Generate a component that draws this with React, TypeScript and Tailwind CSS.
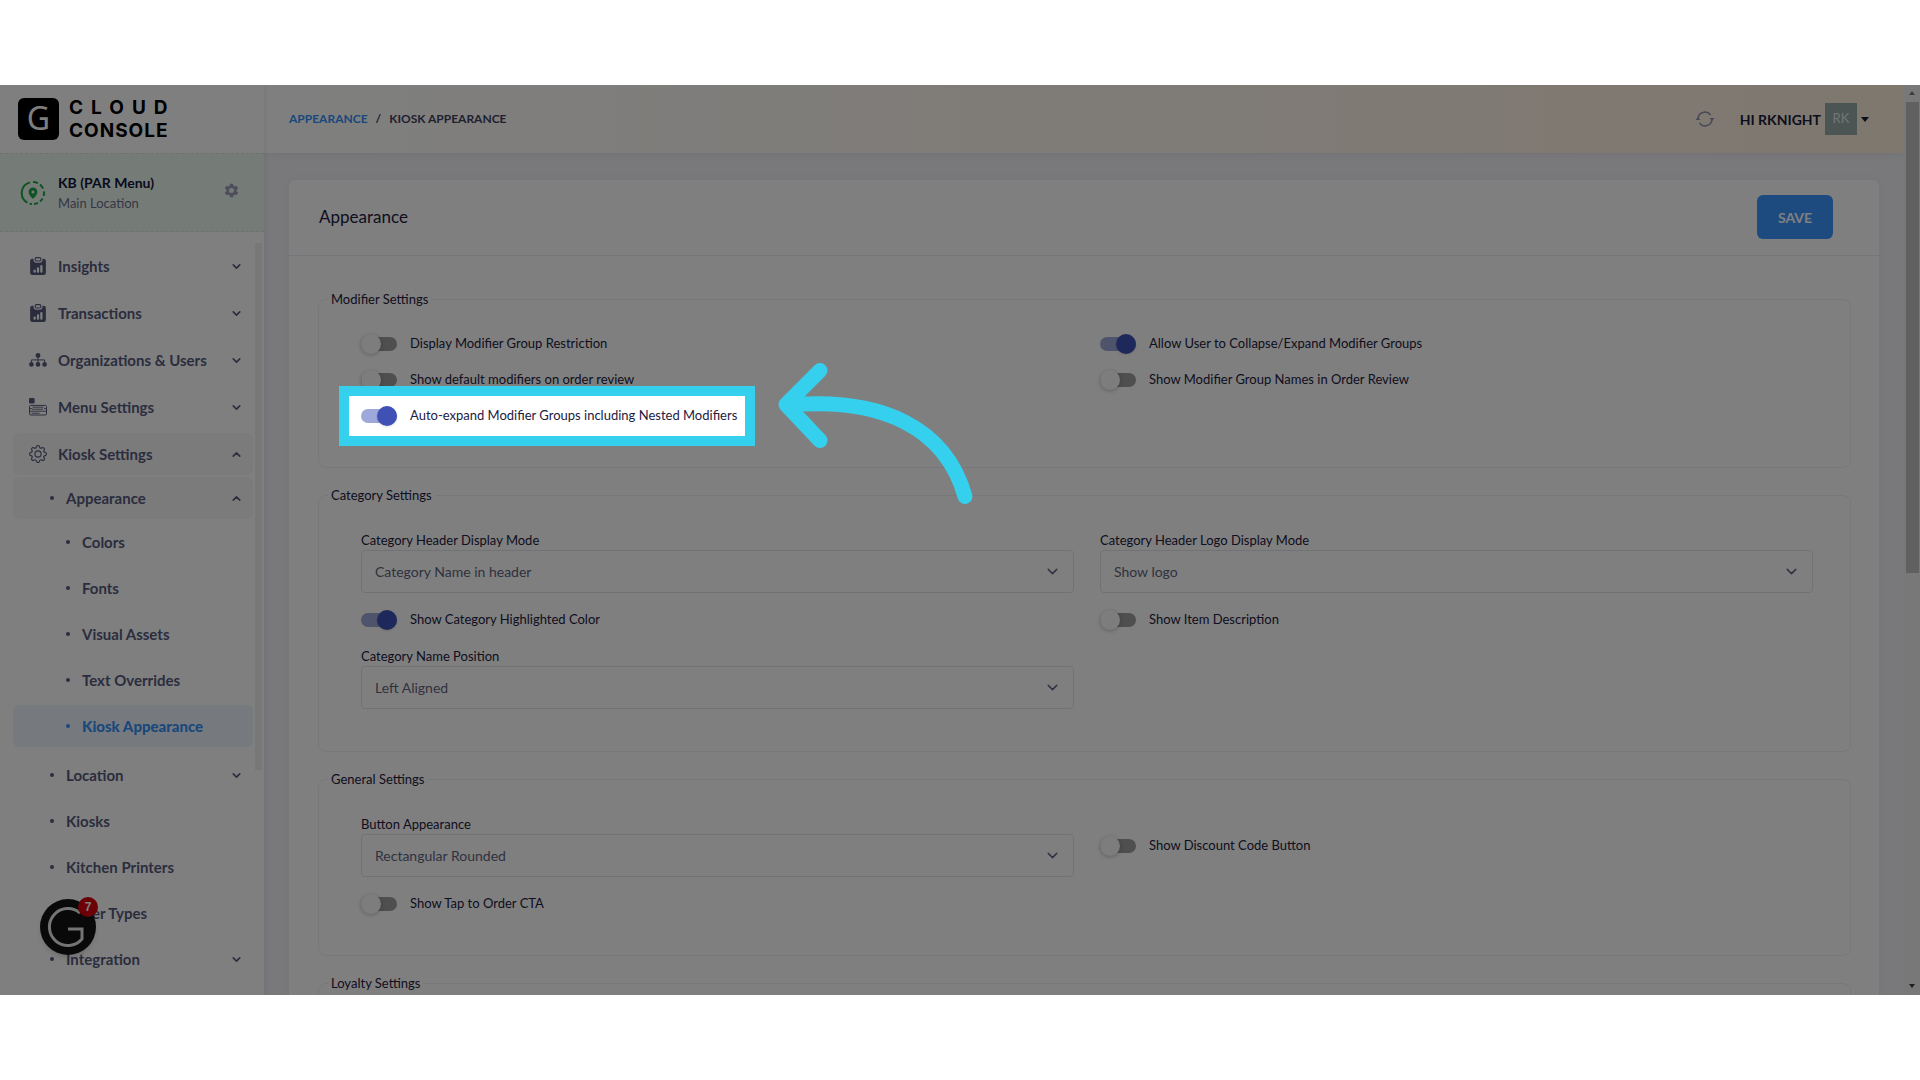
import { useState } from "react";
import { BsClipboardDataFill, BsGear } from "react-icons/bs";
import { MdSettings } from "react-icons/md";
import { FiChevronDown, FiChevronUp } from "react-icons/fi";

type NavItem = {
  label: string;
  level: 1 | 2 | 3;
  icon?: React.ReactNode;
  open?: boolean;
  group?: boolean;
  active?: boolean;
};

function OrgIcon() {
  return (
    <svg width="18" height="18" viewBox="0 0 18 18" fill="currentColor">
      <circle cx="9" cy="4.5" r="2.4" />
      <circle cx="2.4" cy="13.4" r="2.3" />
      <circle cx="9" cy="13.4" r="2.3" />
      <circle cx="15.6" cy="13.4" r="2.3" />
      <path d="M9 6v6M2.4 11.5V8.9h13.2v2.6" fill="none" stroke="currentColor" strokeWidth="1" />
    </svg>
  );
}

function MenuIcon() {
  return (
    <svg width="18" height="18" viewBox="0 0 18 18" fill="none" stroke="currentColor">
      <rect x="0" y="0" width="5.6" height="5.4" rx="1.2" fill="currentColor" stroke="none" />
      <rect x="0.5" y="7.4" width="17" height="9.6" rx="1.2" />
      <path d="M.5 10.6h2.5M15 10.6h2.5M.5 13.2h17M3.5 9.2h11M3 11.2h11M2.5 15.2h8" strokeWidth=".9" />
    </svg>
  );
}

const NAV: NavItem[] = [
  { label: "Insights", level: 1, icon: <BsClipboardDataFill size={18} />, group: true },
  { label: "Transactions", level: 1, icon: <BsClipboardDataFill size={18} />, group: true },
  { label: "Organizations & Users", level: 1, icon: <OrgIcon />, group: true },
  { label: "Menu Settings", level: 1, icon: <MenuIcon />, group: true },
  { label: "Kiosk Settings", level: 1, icon: <BsGear size={18} />, group: true, open: true },
  { label: "Appearance", level: 2, group: true, open: true },
  { label: "Colors", level: 3 },
  { label: "Fonts", level: 3 },
  { label: "Visual Assets", level: 3 },
  { label: "Text Overrides", level: 3 },
  { label: "Kiosk Appearance", level: 3, active: true },
  { label: "Location", level: 2, group: true },
  { label: "Kiosks", level: 2 },
  { label: "Kitchen Printers", level: 2 },
  { label: "Order Types", level: 2 },
  { label: "Integration", level: 2, group: true },
];

const INDENT = { 1: "pl-4", 2: "pl-9", 3: "pl-[52px]" };

function NavRow({ item }: { item: NavItem }) {
  let tone = "font-bold text-[#565b7c]";
  if (item.open) tone = "font-bold text-[#565b7c] bg-[#f6f6f9]";
  if (item.active) tone = "font-black text-[#3591f6] bg-[#edf5ff]";

  let gap = item.level === 1 ? "mb-[5px]" : "mb-1";
  if (item.open) gap = "mb-[2px]";
  if (item.active) gap = "mb-[7px]";

  return (
    <li className={gap}>
      <a href="#" className={`flex h-[42px] items-center rounded-md pr-[10px] text-[15px] ${INDENT[item.level]} ${tone}`}>
        {item.icon ? (
          <span className="w-[29px]">{item.icon}</span>
        ) : (
          <span className="w-[17px] pl-px">
            <span className="block h-1 w-1 rounded-full bg-current" />
          </span>
        )}
        <span className="flex-1 whitespace-nowrap">{item.label}</span>
        {item.group && (item.open ? <FiChevronUp size={13} strokeWidth={3} /> : <FiChevronDown size={13} strokeWidth={3} />)}
      </a>
    </li>
  );
}

function Sidebar() {
  return (
    <aside className="z-10 flex w-[264px] shrink-0 flex-col bg-white shadow-[0_0_6px_rgba(82,63,105,0.15)]">
      <div className="flex h-[68px] shrink-0 items-center gap-[10px] pl-[18px]">
        <span className="flex h-[42px] w-[41px] items-center justify-center rounded-md bg-black pb-[2px] font-['Noto_Sans'] text-[32px] text-white">
          G
        </span>
        <span className="font-['Inter'] text-[19px] leading-[23px] font-bold text-black">
          <span className="block tracking-[8px]">CLOUD</span>
          <span className="block tracking-[1px]">CONSOLE</span>
        </span>
      </div>
      <div className="flex h-[79px] shrink-0 items-center border-y border-dashed border-[#dbe5e0] bg-[#ebf7ef] pl-5">
        <svg width="26" height="26" viewBox="0 0 26 26" fill="none" stroke="#1fa64a" strokeWidth="2">
          <path d="M10 2.4A11 11 0 0 0 7.5 22.7M13 2a11 11 0 0 1 5 1.2M20 4.6a11 11 0 0 1 3 4M24 11.4a11 11 0 0 1-.4 4.6M22.6 18.4a11 11 0 0 1-2.6 3M18 22.8a11 11 0 0 1-4 1.2M12 24a11 11 0 0 1-2.5-.4" />
          <path d="M13 7.5a4.4 4.4 0 0 0-4.4 4.4c0 3 4.4 7 4.4 7s4.4-4 4.4-7A4.4 4.4 0 0 0 13 7.5z" fill="#1fa64a" stroke="none" />
          <circle cx="13" cy="12" r="1.5" fill="#ebf7ef" stroke="none" />
        </svg>
        <div className="flex-1 pl-3">
          <div className="text-[14px] leading-5 font-bold text-[#11163a]">KB (PAR Menu)</div>
          <div className="text-[13px] leading-5 text-[#6b6f8c]">Main Location</div>
        </div>
        <button aria-label="Location settings" className="mr-6 pb-1 text-[#9a9cb5]">
          <MdSettings size={17} />
        </button>
      </div>
      <div className="flex min-h-0 flex-1">
        <ul className="min-w-0 flex-1 pt-[13px] pl-[13px]">
          {NAV.map((item) => (
            <NavRow key={item.label} item={item} />
          ))}
        </ul>
        <div className="mr-[2px] ml-[2px] w-[7px] pt-[11px]">
          <div className="h-[527px] bg-[#f1f1f1]" />
        </div>
      </div>
    </aside>
  );
}

function TopBar() {
  return (
    <header className="flex h-[68px] shrink-0 items-center bg-linear-to-r from-white to-[#fff0de] pr-[35px] pl-[25px] shadow-[0_0_10px_rgba(82,63,105,0.1)]">
      <nav className="flex flex-1 gap-2 text-[12px] font-bold text-[#3f4260]">
        <a href="#" className="text-[#3591f6]">APPEARANCE</a>
        <span>/</span>
        <span>KIOSK APPEARANCE</span>
      </nav>
      <button aria-label="Refresh" className="mr-[25px] text-[#8f93b5]">
        <svg width="20" height="18" viewBox="0 0 20 18" fill="none" stroke="currentColor" strokeWidth="1.5">
          <path d="M3 9a7 7 0 0 1 12.6-4M17 9a7 7 0 0 1-12.6 4" />
          <path d="M.5 10h5L3 7zM14.5 8h5L17 11z" fill="currentColor" stroke="none" />
        </svg>
      </button>
      <button className="flex items-center gap-1 text-[14px] font-bold text-[#191b3a]">
        HI RKNIGHT
        <span className="flex h-8 w-8 items-center justify-center bg-[#96aaa9] text-[13px] font-normal text-[#e3eaea]">RK</span>
        <span className="border-x-4 border-t-[5px] border-x-transparent border-t-[#191b3a]" />
      </button>
    </header>
  );
}

function Toggle({ label, on, highlight }: { label: string; on?: boolean; highlight?: boolean }) {
  const [checked, setChecked] = useState(!!on);
  return (
    <label className="relative flex h-9 items-center self-center text-[13px] text-[#1d2040]">
      <span className="relative mr-[13px] flex h-5 w-9 items-center">
        <input
          type="checkbox"
          checked={checked}
          onChange={() => setChecked(!checked)}
          className="h-[14px] w-9 appearance-none rounded-full bg-[#9e9e9e] checked:bg-[#9fa8da]"
        />
        <span
          className={
            checked
              ? "pointer-events-none absolute right-0 h-5 w-5 rounded-full bg-[#3f51b5] shadow"
              : "pointer-events-none absolute left-0 h-5 w-5 rounded-full bg-[#fafafa] shadow-[0_1px_4px_rgba(0,0,0,0.25)]"
          }
        />
      </span>
      {label}
      {highlight && <Spotlight />}
    </label>
  );
}

// Frames one row, dims the rest of the window and points at it.
function Spotlight() {
  return (
    <>
      <span className="pointer-events-none absolute -top-3 -left-[22px] z-40 h-[60px] w-[416px] border-[10px] border-[#35d0ee] shadow-[0_0_0_3000px_rgba(0,0,0,0.5)]" />
      <svg
        className="pointer-events-none absolute -top-10 left-[413px] z-50 h-[150px] w-[202px]"
        viewBox="774 358 202 150"
        fill="none"
        stroke="#35d0ee"
        strokeWidth="15"
        strokeLinecap="round"
        strokeLinejoin="round"
      >
        <path d="M820 370.5 786 404.5 820 440.5M790 405C882 397 946 428 965 496.5" />
      </svg>
    </>
  );
}

function Select({ label, value }: { label: string; value: string }) {
  return (
    <label className="block pt-2 pb-[9px] text-[13px] leading-5 text-[#1d2040]">
      {label}
      <span className="relative block">
        <select className="block h-[43px] w-full appearance-none rounded border border-[#e2e5ec] bg-white px-[13px] text-[14px] text-[#5f6480]">
          <option>{value}</option>
        </select>
        <FiChevronDown size={17} strokeWidth={2} className="pointer-events-none absolute top-[13px] right-[13px] text-[#5f6480]" />
      </span>
    </label>
  );
}

function Section({ title, children }: { title: string; children?: React.ReactNode }) {
  return (
    <fieldset className="mb-[17px] rounded-lg border border-[#f0f0f5] pr-[37px] pb-[33px] pl-[42px]">
      <legend className="-ml-[33px] px-[3px] text-[13px] leading-5 text-[#1d2040]">{title}</legend>
      <div className="grid grid-cols-2 gap-x-[26px] pt-[17px]">{children}</div>
    </fieldset>
  );
}

export default function App() {
  return (
    <div className="flex h-screen flex-col bg-white py-[85px] font-['Lato',sans-serif]">
      <div className="relative flex min-h-0 flex-1 overflow-hidden bg-[#f2f3f8]">
        <Sidebar />
        <div className="flex min-w-0 flex-1 flex-col">
          <TopBar />
          <main className="mx-[25px] mt-[27px] rounded-md bg-white shadow-[0_0_13px_rgba(82,63,105,0.05)]">
            <div className="flex h-[76px] items-center border-b border-[#ebedf2] pr-[46px] pb-px pl-[30px]">
              <h1 className="flex-1 text-[17px] text-[#1d2040]">Appearance</h1>
              <button className="h-11 w-[76px] rounded-md bg-[#3a97ff] text-[14px] font-bold text-white">SAVE</button>
            </div>
            <div className="pt-[33px] pr-[28px] pl-[29px]">
              <Section title="Modifier Settings">
                <Toggle label="Display Modifier Group Restriction" />
                <Toggle label="Allow User to Collapse/Expand Modifier Groups" on />
                <Toggle label="Show default modifiers on order review" />
                <Toggle label="Show Modifier Group Names in Order Review" />
                <Toggle label="Auto-expand Modifier Groups including Nested Modifiers" on highlight />
              </Section>
              <Section title="Category Settings">
                <Select label="Category Header Display Mode" value="Category Name in header" />
                <Select label="Category Header Logo Display Mode" value="Show logo" />
                <Toggle label="Show Category Highlighted Color" on />
                <Toggle label="Show Item Description" />
                <Select label="Category Name Position" value="Left Aligned" />
              </Section>
              <Section title="General Settings">
                <Select label="Button Appearance" value="Rectangular Rounded" />
                <Toggle label="Show Discount Code Button" />
                <Toggle label="Show Tap to Order CTA" />
              </Section>
              <Section title="Loyalty Settings" />
            </div>
          </main>
        </div>
        <div className="flex w-4 shrink-0 flex-col items-center justify-between bg-[#f1f1f1]">
          <div className="flex flex-col items-center pt-[6px]">
            <span className="border-x-[3px] border-b-4 border-x-transparent border-b-[#7a7a7a]" />
            <span className="mt-[7px] h-[471px] w-[13px] bg-[#c1c1c1]" />
          </div>
          <span className="mb-[7px] border-x-[3px] border-t-4 border-x-transparent border-t-[#404040]" />
        </div>
        <button aria-label="Help center" className="absolute bottom-10 left-10 z-20 h-14 w-14 rounded-full bg-[#131313] shadow-md">
          <svg viewBox="0 0 56 56" fill="none" stroke="#e8e8e8" strokeWidth="3">
            <path d="M40 14A18.5 18.5 0 1 0 42 40V30H28" />
          </svg>
          <span className="absolute -top-[2px] left-[38px] flex h-5 w-5 items-center justify-center rounded-full bg-[#d6000c] font-['Liberation_Sans'] text-xs font-bold text-white">
            7
          </span>
        </button>
      </div>
    </div>
  );
}
